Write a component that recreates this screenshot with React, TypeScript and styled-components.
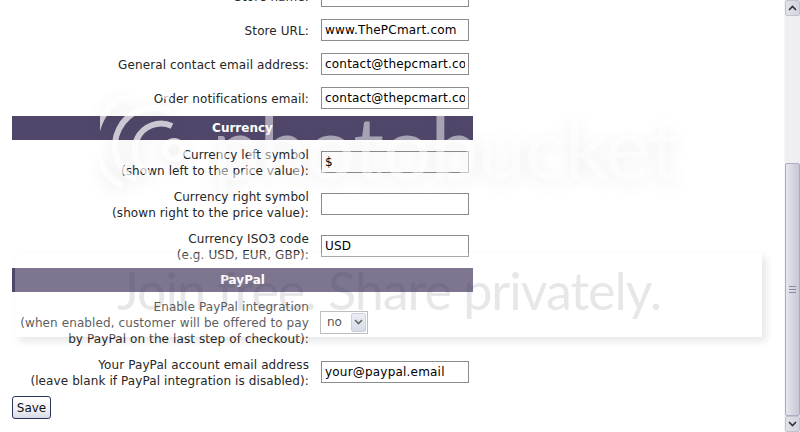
import React from "react";
import styled, { createGlobalStyle } from "styled-components";

const GlobalStyle = createGlobalStyle`
  html, body {
    margin: 0;
    padding: 0;
    background: #fff;
  }
  body {
    font-family: "DejaVu Sans", Verdana, sans-serif;
    font-size: 12px;
    color: #222;
  }
`;

const Page = styled.div`
  display: flex;
  width: 800px;
  height: 432px;
  overflow: hidden;
`;

const Main = styled.div`
  position: relative;
  flex: 1;
  overflow: hidden;
  padding-left: 12px;
`;

// page is scrolled down a bit, so the first row is cut off at the top
const Form = styled.form`
  margin-top: -22px;
`;

const Table = styled.table`
  width: 461px;
  table-layout: fixed;
  border-collapse: separate;
  border-spacing: 0 2px;
`;

const LabelCell = styled.td`
  width: 297px;
  padding: 5px 5px 3px 0;
  text-align: right;
  vertical-align: middle;
  line-height: 16px;
  letter-spacing: 0.1px;
  color: #262626;
`;

const FieldCell = styled.td`
  padding: 4px 0 4px 7px;
  vertical-align: middle;
`;

const SectionHead = styled.th`
  height: 24px;
  padding: 0;
  background: #51476a;
  color: #fff;
  font-size: 12px;
  font-weight: bold;
  text-align: center;
`;

const TextInput = styled.input`
  display: block;
  box-sizing: border-box;
  width: 148px;
  height: 22px;
  margin: 1px 0;
  padding: 0 3px;
  border: 1px solid #8c8c8c;
  font-family: "DejaVu Sans", Verdana, sans-serif;
  font-size: 12px;
  letter-spacing: 0.2px;
  color: #000;
  background: #fff;
  outline: none;
`;

const SelectBox = styled.div`
  position: relative;
  width: 48px;
  height: 23px;
  margin-left: -1px;
`;

const NativeSelect = styled.select`
  appearance: none;
  box-sizing: border-box;
  width: 100%;
  height: 100%;
  margin: 0;
  padding: 0 0 0 6px;
  border: 1px solid #a8a8ac;
  border-radius: 0;
  background: #fff;
  font-family: "DejaVu Sans", Verdana, sans-serif;
  font-size: 12px;
  color: #111;
`;

const SelectArrow = styled.span`
  position: absolute;
  top: 2px;
  right: 2px;
  width: 15px;
  height: 19px;
  box-sizing: border-box;
  border: 1px solid #b9c0d0;
  border-radius: 2px;
  background: linear-gradient(#e4e8f2, #c9d0e2);
  display: flex;
  align-items: center;
  justify-content: center;
  pointer-events: none;
`;

const SaveButton = styled.button`
  display: block;
  margin: 2px 0 0;
  height: 23px;
  width: 39px;
  padding: 0;
  border: 1px solid #27375c;
  border-radius: 3px;
  background: linear-gradient(#ffffff, #f0f0f4 60%, #d9d9e4);
  font-family: "DejaVu Sans", Verdana, sans-serif;
  font-size: 12px;
  color: #111;
`;

/* photobucket watermark laid over the page */
const Watermark = styled.div`
  position: absolute;
  inset: 0;
  pointer-events: none;
`;

const LogoMark = styled.div`
  position: absolute;
  left: 100px;
  top: 96px;
  display: flex;
  align-items: center;
  gap: 8px;
  filter: drop-shadow(0 4px 8px rgba(0, 0, 0, 0.12));
`;

const LogoWord = styled.span`
  font-family: Lato, "Open Sans", sans-serif;
  font-size: 86px;
  letter-spacing: -1px;
  line-height: 1;
  color: rgba(255, 255, 255, 0.5);
`;

const JoinBand = styled.div`
  position: absolute;
  left: 15px;
  top: 253px;
  width: 747px;
  height: 84px;
  background: rgba(255, 255, 255, 0.26);
  box-shadow: 4px 4px 8px rgba(0, 0, 0, 0.1);
`;

const JoinText = styled.span`
  position: absolute;
  left: 102px;
  top: 11px;
  font-family: Lato, "Open Sans", sans-serif;
  font-size: 52px;
  line-height: 1;
  letter-spacing: -1px;
  white-space: nowrap;
  color: rgba(60, 60, 80, 0.12);
`;

const Scrollbar = styled.div`
  display: flex;
  flex-direction: column;
  width: 16px;
  height: 432px;
  background: #efeff3;
  border-left: 1px solid #f6f6f8;
  box-sizing: border-box;
`;

const ScrollButton = styled.div`
  height: 16px;
  box-sizing: border-box;
  border: 1px solid #c3c3d0;
  border-radius: 2px;
  background: linear-gradient(90deg, #e2e2ea, #d3d3df);
  display: flex;
  align-items: center;
  justify-content: center;
`;

const TrackGap = styled.div`
  height: 147px;
`;

const Thumb = styled.div`
  flex: 1;
  box-sizing: border-box;
  border: 1px solid #acacc0;
  border-radius: 2px;
  background: linear-gradient(90deg, #e6e6ee, #d6d6e2 50%, #c8c8d6);
  display: flex;
  align-items: center;
  justify-content: center;
`;

const Chevron = ({ up }: { up?: boolean }) => (
  <svg width="9" height="6" viewBox="0 0 9 6">
    <path
      d={up ? "M1 5 L4.5 1.5 L8 5" : "M1 1 L4.5 4.5 L8 1"}
      fill="none"
      stroke="#333"
      strokeWidth="1.6"
    />
  </svg>
);

const Grip = () => (
  <svg width="7" height="7" viewBox="0 0 7 7">
    <path d="M0 0.5H7M0 3.5H7M0 6.5H7" stroke="#8b8ba0" strokeWidth="1" />
  </svg>
);

const Swirl = () => (
  <svg width="104" height="100" viewBox="0 0 104 100">
    <g fill="none" stroke="rgba(255,255,255,0.7)" strokeWidth="6">
      <path d="M22 90 A50 50 0 0 1 70 2" />
      <path d="M36 84 A36 36 0 0 1 70 16" />
      <path d="M50 78 A22 22 0 0 1 72 30" />
      <circle cx="74" cy="54" r="9" />
    </g>
  </svg>
);

type Field = { label: string[]; value?: string };

const storeFields: Field[] = [
  { label: ["Store name:"], value: "The PC Mart" },
  { label: ["Store URL:"], value: "www.ThePCmart.com" },
  { label: ["General contact email address:"], value: "contact@thepcmart.com" },
  { label: ["Order notifications email:"], value: "contact@thepcmart.com" },
];

const currencyFields: Field[] = [
  { label: ["Currency left symbol", "(shown left to the price value):"], value: "$" },
  { label: ["Currency right symbol", "(shown right to the price value):"], value: "" },
  { label: ["Currency ISO3 code", "(e.g. USD, EUR, GBP):"], value: "USD" },
];

const Label = ({ lines }: { lines: string[] }) => (
  <LabelCell>
    {lines.map((l, i) => (
      <React.Fragment key={i}>
        {i > 0 && <br />}
        {l}
      </React.Fragment>
    ))}
  </LabelCell>
);

const InputRow = ({ f }: { f: Field }) => (
  <tr>
    <Label lines={f.label} />
    <FieldCell>
      <TextInput type="text" defaultValue={f.value} />
    </FieldCell>
  </tr>
);

export default function App() {
  return (
    <>
      <GlobalStyle />
      <Page>
        <Main>
          <Form onSubmit={(e) => e.preventDefault()}>
            <Table>
              <tbody>
                {storeFields.map((f) => (
                  <InputRow key={f.label[0]} f={f} />
                ))}
                <tr>
                  <SectionHead colSpan={2}>Currency</SectionHead>
                </tr>
                {currencyFields.map((f) => (
                  <InputRow key={f.label[0]} f={f} />
                ))}
                <tr>
                  <SectionHead colSpan={2}>PayPal</SectionHead>
                </tr>
                <tr>
                  <Label
                    lines={[
                      "Enable PayPal integration",
                      "(when enabled, customer will be offered to pay",
                      "by PayPal on the last step of checkout):",
                    ]}
                  />
                  <FieldCell>
                    <SelectBox>
                      <NativeSelect defaultValue="no">
                        <option value="no">no</option>
                        <option value="yes">yes</option>
                      </NativeSelect>
                      <SelectArrow>
                        <Chevron />
                      </SelectArrow>
                    </SelectBox>
                  </FieldCell>
                </tr>
                <InputRow
                  f={{
                    label: [
                      "Your PayPal account email address",
                      "(leave blank if PayPal integration is disabled):",
                    ],
                    value: "your@paypal.email",
                  }}
                />
              </tbody>
            </Table>
            <SaveButton type="submit">Save</SaveButton>
          </Form>
          <Watermark>
            <LogoMark>
              <Swirl />
              <LogoWord>photobucket</LogoWord>
            </LogoMark>
            <JoinBand>
              <JoinText>Join free. Share privately.</JoinText>
            </JoinBand>
          </Watermark>
        </Main>
        <Scrollbar>
          <ScrollButton>
            <Chevron up />
          </ScrollButton>
          <TrackGap />
          <Thumb>
            <Grip />
          </Thumb>
          <ScrollButton>
            <Chevron />
          </ScrollButton>
        </Scrollbar>
      </Page>
    </>
  );
}
